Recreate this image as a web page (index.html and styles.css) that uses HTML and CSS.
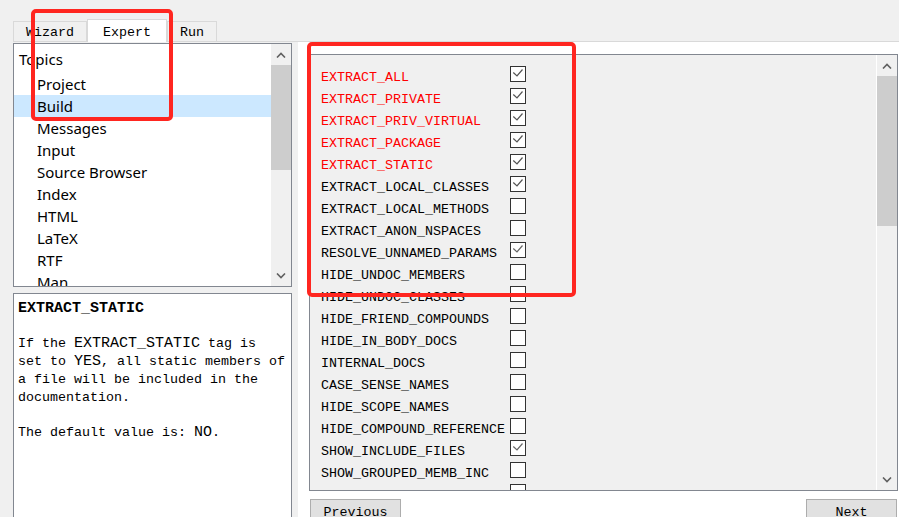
FILE: index.html
```html
<!DOCTYPE html>
<html lang="en">
<head>
    <meta charset="UTF-8">
    <meta name="viewport" content="width=device-width, initial-scale=1.0">
    <title>Doxywizard - Expert</title>
    <link rel="stylesheet" href="styles.css">
</head>
<body>
    <div class="window">
        <div class="tabbar">
            <div class="tab">Wizard</div>
            <div class="tab active">Expert</div>
            <div class="tab">Run</div>
        </div>

        <div class="page">
            <div class="side">
                <div class="topics">
                    <ul class="topic-list">
                        <li class="topic-head">Topics</li>
                        <li>Project</li>
                        <li class="selected">Build</li>
                        <li>Messages</li>
                        <li>Input</li>
                        <li>Source Browser</li>
                        <li>Index</li>
                        <li>HTML</li>
                        <li>LaTeX</li>
                        <li>RTF</li>
                        <li>Man</li>
                    </ul>
                    <div class="scrollbar">
                        <div class="scroll-arrow">
                            <svg width="10" height="6" viewBox="0 0 10 6"><polyline points="1,5.5 5,1.5 9,5.5" fill="none" stroke="#606060" stroke-width="1.6"/></svg>
                        </div>
                        <div class="scroll-thumb"></div>
                        <div class="scroll-track"></div>
                        <div class="scroll-arrow">
                            <svg width="10" height="6" viewBox="0 0 10 6"><polyline points="1,0.5 5,4.5 9,0.5" fill="none" stroke="#606060" stroke-width="1.6"/></svg>
                        </div>
                    </div>
                </div>

                <div class="help">
                    <p class="help-title">EXTRACT_STATIC</p>
                    <p>If the <code>EXTRACT_STATIC</code> tag is set to <code>YES</code>, all static members of a file will be included in the documentation.</p>
                    <p>The default value is: <code>NO</code>.</p>
                </div>
            </div>

            <div class="main">
                <div class="options">
                    <div class="option-list">
                        <div class="option"><span class="option-name changed">EXTRACT_ALL</span><span class="check on"><svg width="14" height="14" viewBox="0 0 14 14"><polyline points="2.3,5.5 6,9 11.5,2.5" fill="none" stroke="#555" stroke-width="1.2"/></svg></span></div>
                        <div class="option"><span class="option-name changed">EXTRACT_PRIVATE</span><span class="check on"><svg width="14" height="14" viewBox="0 0 14 14"><polyline points="2.3,5.5 6,9 11.5,2.5" fill="none" stroke="#555" stroke-width="1.2"/></svg></span></div>
                        <div class="option"><span class="option-name changed">EXTRACT_PRIV_VIRTUAL</span><span class="check on"><svg width="14" height="14" viewBox="0 0 14 14"><polyline points="2.3,5.5 6,9 11.5,2.5" fill="none" stroke="#555" stroke-width="1.2"/></svg></span></div>
                        <div class="option"><span class="option-name changed">EXTRACT_PACKAGE</span><span class="check on"><svg width="14" height="14" viewBox="0 0 14 14"><polyline points="2.3,5.5 6,9 11.5,2.5" fill="none" stroke="#555" stroke-width="1.2"/></svg></span></div>
                        <div class="option"><span class="option-name changed">EXTRACT_STATIC</span><span class="check on"><svg width="14" height="14" viewBox="0 0 14 14"><polyline points="2.3,5.5 6,9 11.5,2.5" fill="none" stroke="#555" stroke-width="1.2"/></svg></span></div>
                        <div class="option"><span class="option-name">EXTRACT_LOCAL_CLASSES</span><span class="check on"><svg width="14" height="14" viewBox="0 0 14 14"><polyline points="2.3,5.5 6,9 11.5,2.5" fill="none" stroke="#555" stroke-width="1.2"/></svg></span></div>
                        <div class="option"><span class="option-name">EXTRACT_LOCAL_METHODS</span><span class="check"></span></div>
                        <div class="option"><span class="option-name">EXTRACT_ANON_NSPACES</span><span class="check"></span></div>
                        <div class="option"><span class="option-name">RESOLVE_UNNAMED_PARAMS</span><span class="check on"><svg width="14" height="14" viewBox="0 0 14 14"><polyline points="2.3,5.5 6,9 11.5,2.5" fill="none" stroke="#666" stroke-width="1.2"/></svg></span></div>
                        <div class="option"><span class="option-name">HIDE_UNDOC_MEMBERS</span><span class="check"></span></div>
                        <div class="option"><span class="option-name">HIDE_UNDOC_CLASSES</span><span class="check"></span></div>
                        <div class="option"><span class="option-name">HIDE_FRIEND_COMPOUNDS</span><span class="check"></span></div>
                        <div class="option"><span class="option-name">HIDE_IN_BODY_DOCS</span><span class="check"></span></div>
                        <div class="option"><span class="option-name">INTERNAL_DOCS</span><span class="check"></span></div>
                        <div class="option"><span class="option-name">CASE_SENSE_NAMES</span><span class="check"></span></div>
                        <div class="option"><span class="option-name">HIDE_SCOPE_NAMES</span><span class="check"></span></div>
                        <div class="option"><span class="option-name">HIDE_COMPOUND_REFERENCE</span><span class="check"></span></div>
                        <div class="option"><span class="option-name">SHOW_INCLUDE_FILES</span><span class="check on"><svg width="14" height="14" viewBox="0 0 14 14"><polyline points="2.3,5.5 6,9 11.5,2.5" fill="none" stroke="#666" stroke-width="1.2"/></svg></span></div>
                        <div class="option"><span class="option-name">SHOW_GROUPED_MEMB_INC</span><span class="check"></span></div>
                        <div class="option"><span class="option-name">FORCE_LOCAL_INCLUDES</span><span class="check"></span></div>
                    </div>
                    <div class="scrollbar">
                        <div class="scroll-arrow">
                            <svg width="10" height="6" viewBox="0 0 10 6"><polyline points="1,5.5 5,1.5 9,5.5" fill="none" stroke="#606060" stroke-width="1.6"/></svg>
                        </div>
                        <div class="scroll-thumb"></div>
                        <div class="scroll-track"></div>
                        <div class="scroll-arrow">
                            <svg width="10" height="6" viewBox="0 0 10 6"><polyline points="1,0.5 5,4.5 9,0.5" fill="none" stroke="#606060" stroke-width="1.6"/></svg>
                        </div>
                    </div>
                </div>

                <div class="buttons">
                    <button>Previous</button>
                    <button>Next</button>
                </div>
            </div>
        </div>

        <!-- highlight frames drawn over the window -->
        <div class="mark mark-tabs"></div>
        <div class="mark mark-options"></div>
    </div>
</body>
</html>
```

FILE: styles.css
```css
body {
    margin: 0;
    background: #f0f0f0;
    overflow: hidden;
}
.window {
    position: relative;
    width: 899px;
    height: 517px;
    overflow: hidden;
    font-family: "Liberation Mono", monospace;
    font-size: 13.33px;
    color: #000;
}

/* tabs */
.tabbar {
    display: flex;
    align-items: flex-end;
    height: 42px;
    box-sizing: border-box;
    margin-left: 13px;
    border-bottom: 1px solid #d9d9d9;
}
.tab {
    height: 20px;
    box-sizing: border-box;
    padding: 1px 12px 0;
    border: 1px solid #d9d9d9;
    border-bottom: none;
    background: #f0f0f0;
    display: flex;
    align-items: center;
}
.tab.active {
    height: 23px;
    padding: 2px 15px 0;
    margin-bottom: -1px;
    background: #fff;
}

.page { display: flex; height: 475px; }

/* left column: topic tree + help text */
.side {
    width: 298px;
    flex-shrink: 0;
    box-sizing: border-box;
    padding: 1px 6px 0 13px;
    display: flex;
    flex-direction: column;
    gap: 6px;
}
.topics {
    height: 244px;
    flex-shrink: 0;
    box-sizing: border-box;
    border: 1px solid #828790;
    background: #fff;
    display: flex;
}
.topic-list {
    flex: 1;
    list-style: none;
    margin: 0;
    padding: 4px 0 0;
    overflow: hidden;
    font-family: "Noto Sans", sans-serif;
    font-size: 15px;
}
.topic-list li {
    height: 22px;
    line-height: 22px;
    padding-left: 23px;
    white-space: nowrap;
}
.topic-list .topic-head { padding-left: 5px; margin-bottom: 3px; }
.topic-list .selected { background: #cce8ff; }

.scrollbar {
    width: 20px;
    flex-shrink: 0;
    display: flex;
    flex-direction: column;
    background: #f0f0f0;
}
.scroll-arrow {
    height: 21px;
    display: flex;
    align-items: center;
    justify-content: center;
}
.scroll-thumb { background: #cdcdcd; }
.scroll-track { flex: 1; }
.topics .scroll-thumb { height: 105px; }

.help {
    flex: 1;
    border: 1px solid #828790;
    border-bottom: none;
    background: #fff;
    padding: 6px 4px 0;
}
.help p { margin: 0 0 17px; line-height: 18px; }
.help .help-title { font-weight: bold; font-size: 15px; }
.help code { font-family: inherit; font-size: 15px; line-height: 1; }

/* right column: option list */
.main {
    flex: 1;
    background: #fff;
    padding: 12px 1px 0 11px;
    display: flex;
    flex-direction: column;
}
.options {
    height: 437px;
    flex-shrink: 0;
    box-sizing: border-box;
    border: 1px solid #828790;
    background: #f0f0f0;
    display: flex;
}
.options .scrollbar { border-left: 1px solid #fff; }
.options .scroll-thumb { height: 150px; }
.option-list {
    flex: 1;
    padding: 10px 0 0 11px;
    overflow: hidden;
}
.option { display: flex; height: 22px; line-height: 22px; }
.option-name { width: 189px; padding-top: 2px; white-space: nowrap; }
.option-name.changed { color: #f00; }
.check {
    width: 16px;
    height: 16px;
    box-sizing: border-box;
    margin-top: 1px;
    border: 1px solid #333;
    background: #fff;
    line-height: 0;
}

.buttons {
    display: flex;
    justify-content: space-between;
    margin-top: 8px;
    padding: 0 1px;
}
.buttons button {
    width: 91px;
    height: 26px;
    padding: 0;
    border: 1px solid #adadad;
    background: #e1e1e1;
    font: inherit;
    color: #000;
}

/* red highlight frames */
.mark {
    position: absolute;
    box-sizing: border-box;
    border: 4px solid #ff2620;
    border-radius: 5px;
}
.mark-tabs { left: 31px; top: 9px; width: 142px; height: 112px; }
.mark-options { left: 307px; top: 42px; width: 269px; height: 255px; }
```
